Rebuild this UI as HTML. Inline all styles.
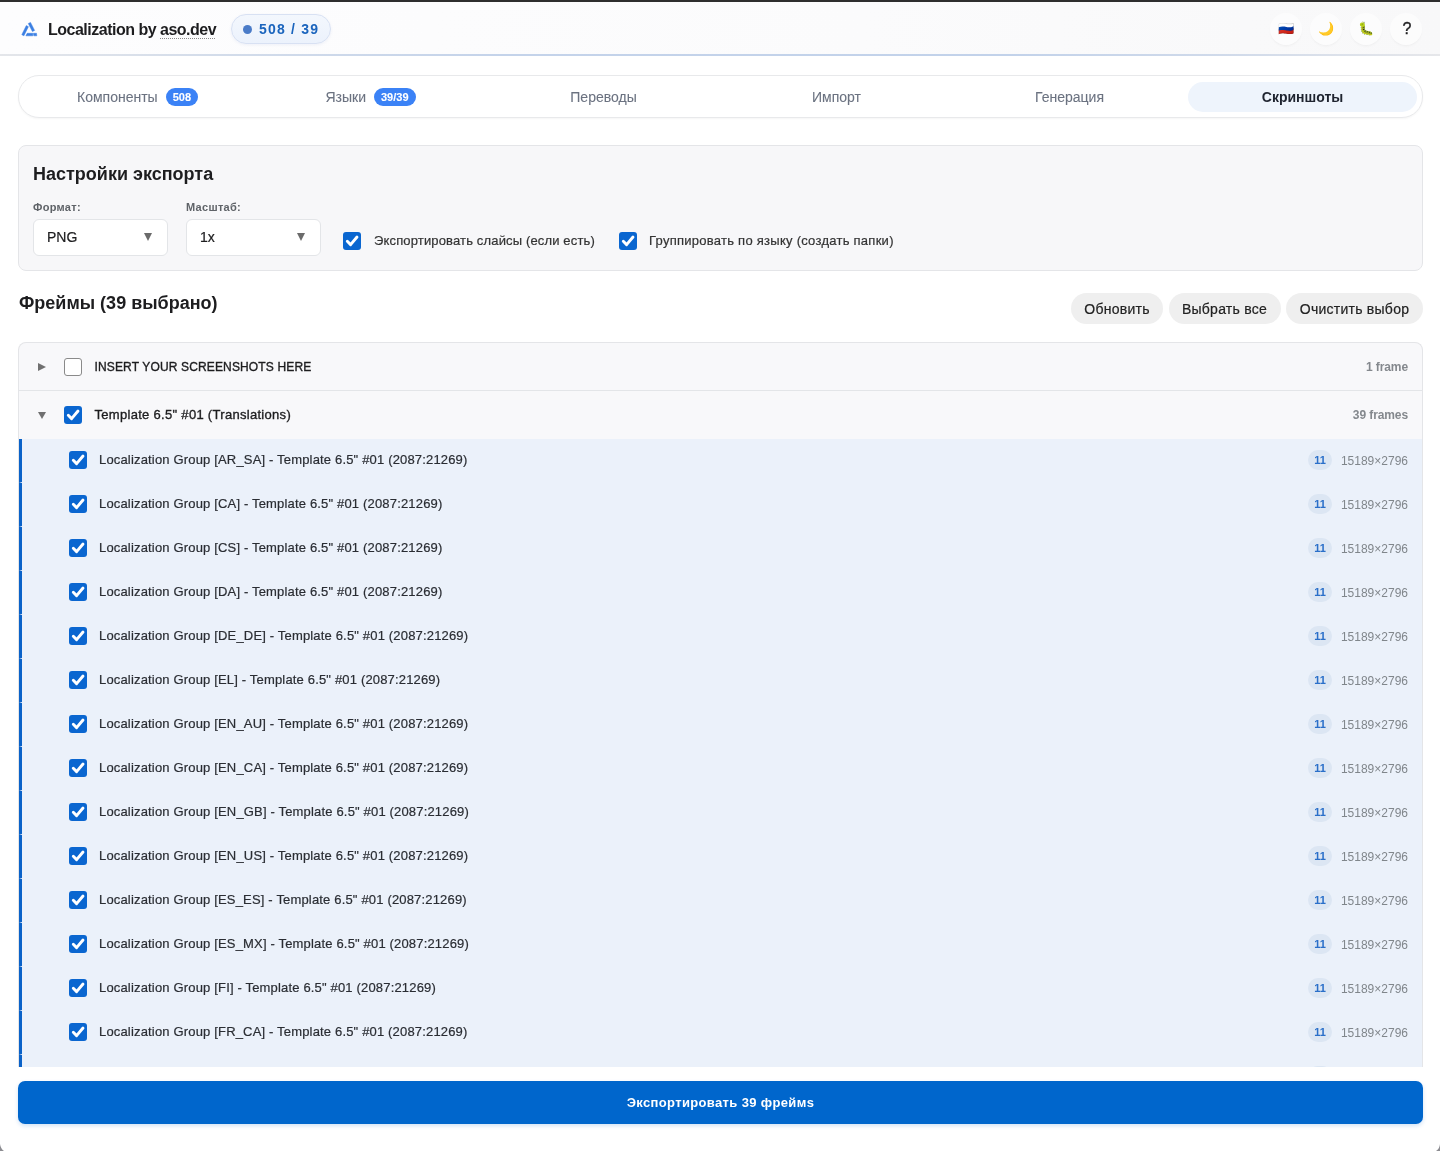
<!DOCTYPE html>
<html><head><meta charset="utf-8">
<style>
*{box-sizing:border-box;margin:0;padding:0}
html,body{width:1440px;height:1151px;overflow:hidden;background:#fff;font-family:"Liberation Sans",sans-serif;color:#1d1d1f}
.wrap{position:absolute;left:0;top:0;width:1440px;height:1151px;will-change:transform}
.topbar{position:absolute;left:0;top:0;width:1440px;height:2px;background:#2e2e2e}
.header{position:absolute;left:0;top:2px;width:1440px;height:52px;background:linear-gradient(90deg,#fdfdfe,#fbfbfc 60%,#f8f8f9)}
.hline{position:absolute;left:0;top:54px;width:1440px;height:2px;background:linear-gradient(90deg,#e4e6ea 0%,#d3dcea 15%,#c4d3ea 35%,#c2d2ea 70%,#d0daea 85%,#e6e7ea 100%)}
.logo{position:absolute}
.brand{position:absolute;left:48px;top:19px;font-size:16px;font-weight:bold;color:#1d1d1f;white-space:nowrap;letter-spacing:-0.5px}
.brand u{text-decoration:none;padding-bottom:1px;background:repeating-linear-gradient(90deg,#8a8a8a 0 1px,transparent 1px 2px) left bottom/100% 1px no-repeat}
.hbadge{position:absolute;left:231px;top:12px;width:100px;height:30px;border-radius:15px;background:linear-gradient(180deg,#f3f7fd,#ecf2fc);border:1px solid #d8e1f3;box-shadow:0 1px 3px rgba(70,90,180,0.08)}
.hbadge .dot{position:absolute;left:11px;top:10px;width:9px;height:9px;border-radius:50%;background:#4a7bc8}
.hbadge .t{position:absolute;left:27px;top:6px;font-size:14px;font-weight:bold;color:#1a64bd;letter-spacing:1.2px;white-space:nowrap}
.ibtn{position:absolute;top:11px;width:32px;height:32px;border-radius:50%;background:rgba(255,255,255,0.55);box-shadow:0 2px 3px -1px rgba(0,0,0,0.05);text-align:center;line-height:32px;font-size:13px}
.tabs{position:absolute;left:18px;top:75px;width:1405px;height:43px;border-radius:21px;border:1px solid #e8e9eb;background:#fff;box-shadow:0 1px 2px rgba(0,0,0,0.04)}
.tab{position:absolute;top:5.5px;height:30px;width:229px;border-radius:15px;text-align:center;line-height:30px;font-size:14px;color:#6b7280;white-space:nowrap}
.tab.active{background:#eef4fc;color:#1f2430;font-weight:bold}
.tbadge{display:inline-block;vertical-align:top;margin-top:6px;height:18px;line-height:18px;border-radius:9px;background:#3b82f6;color:#fff;font-size:11px;font-weight:bold;padding:0 7px;margin-left:8px}
.panel{position:absolute;left:18px;top:145px;width:1405px;height:126px;border-radius:8px;background:#f7f7f9;border:1px solid #e4e5e8}
.ptitle{position:absolute;left:14px;top:18px;font-size:18px;font-weight:bold;color:#1d1d1f;white-space:nowrap}
.lbl{position:absolute;top:55px;font-size:11px;font-weight:bold;color:#5f6368;letter-spacing:0.3px;white-space:nowrap}
.sel{position:absolute;top:73px;width:135px;height:37px;border-radius:6px;background:#fff;border:1px solid #e3e5e8;font-size:14px;color:#1d1d1f}
.sel .v{position:absolute;left:13px;top:9px}
.sel .ar{position:absolute;right:15px;top:13px;width:0;height:0;border-left:4px solid transparent;border-right:4px solid transparent;border-top:8px solid #6b6b6b}
.cb{position:absolute;width:18px;height:18px;border-radius:3px;background:#0a66d0}
.cb svg{position:absolute;left:0;top:0}
.cb.off{background:#fff;border:1.5px solid #8a8a8a}
.clbl{position:absolute;font-size:13px;color:#333;white-space:nowrap;letter-spacing:0.15px}
.ftitle{position:absolute;left:19px;top:293px;font-size:18px;font-weight:bold;color:#1d1d1f;white-space:nowrap}
.btn{position:absolute;top:293px;height:31px;border-radius:16px;background:#efefef;font-size:14px;color:#222;text-align:center;line-height:33px;white-space:nowrap;letter-spacing:0.25px}
.list{position:absolute;left:18px;top:342px;width:1405px;height:725px;border-radius:8px 8px 0 0;background:#f8f8fa;border:1px solid #e4e5e8;border-bottom:none;overflow:hidden}
.grow{position:absolute;left:0;width:1403px;height:48px}
.grow.b{border-bottom:1px solid #e3e5e8}
.tri{position:absolute;width:0;height:0}
.tri.r{left:19px;top:20px;border-top:4px solid transparent;border-bottom:4px solid transparent;border-left:8px solid #707070}
.tri.d{left:19px;top:20.5px;border-left:4px solid transparent;border-right:4px solid transparent;border-top:7.5px solid #707070}
.gname.ins{font-size:12px;letter-spacing:0.15px}
.gname{position:absolute;left:75.5px;font-size:13px;color:#1d1d1f;white-space:nowrap;letter-spacing:0.3px}
.gcount{position:absolute;right:14px;font-size:12px;color:#84888d;font-weight:bold;white-space:nowrap;letter-spacing:-0.1px}
.crow{position:absolute;left:0;width:1403px;height:44px;background:#ebf1fa;border-left:3px solid #0a62c8;border-bottom:1px solid #ebf1fa}
.crow .cb{left:47px;top:12px}
.crow .nm{position:absolute;left:77px;top:13px;font-size:13px;color:#2a2d33;white-space:nowrap;letter-spacing:0.17px}
.crow .pill{position:absolute;left:1286px;top:11px;width:24px;height:20px;border-radius:10px;background:#dce6f3;color:#2a6fc9;font-size:11px;font-weight:bold;text-align:center;line-height:20px}
.crow .dim{position:absolute;right:14px;top:15px;font-size:12px;color:#80868b;white-space:nowrap}
.export{position:absolute;left:18px;top:1081px;width:1405px;height:43px;border-radius:7px;background:#0066cc;color:#fff;font-size:13px;font-weight:bold;text-align:center;line-height:43px;letter-spacing:0.35px;box-shadow:0 2px 4px rgba(0,102,204,0.18)}

.crow .nm,.clbl,.btn,.sel .v{-webkit-text-stroke-width:0.2px}
.gname{-webkit-text-stroke-width:0.35px}
.tab{-webkit-text-stroke-width:0.1px}
.tab.active{-webkit-text-stroke-width:0}
</style></head><body><div class="wrap">
<div class="topbar"></div>
<div class="hline"></div>
<div class="header">
  <svg class="logo" width="24" height="22" viewBox="0 0 24 22" style="left:18px;top:16px"><g fill="#3b7fe2" stroke="#3b7fe2" stroke-width="0.5" stroke-linejoin="round"><path d="M3.8 16.7 L8.3 7.6 L10.4 8.7 L5.9 17.8 Z"/><path d="M10.3 5.5 L12.5 4.4 L16.6 12.4 L14.4 13.5 Z"/><path d="M9.2 15.3 L14.8 15.3 L14.8 17.8 L7.9 17.8 Z"/><path d="M15.4 15.3 L18.5 15.3 L18.8 17.8 L15.8 17.8 Z"/></g></svg>
  <div class="brand">Localization by <u>aso.dev</u></div>
  <div class="hbadge"><div class="dot"></div><div class="t">508 / 39</div></div>
  <div class="ibtn" style="left:1270px">🇷🇺</div>
  <div class="ibtn" style="left:1310px">🌙</div>
  <div class="ibtn" style="left:1350px">🐛</div>
  <div class="ibtn" style="left:1390px;color:#1d1d1f;font-size:16px;-webkit-text-stroke:0.35px #1d1d1f;line-height:31px;padding-left:2px">?</div>
</div>
<div class="tabs">
  <div class="tab" style="left:4px">Компоненты<span class="tbadge">508</span></div>
  <div class="tab" style="left:237px">Языки<span class="tbadge">39/39</span></div>
  <div class="tab" style="left:470px">Переводы</div>
  <div class="tab" style="left:703px">Импорт</div>
  <div class="tab" style="left:936px">Генерация</div>
  <div class="tab active" style="left:1169px">Скриншоты</div>
</div>
<div class="panel">
  <div class="ptitle">Настройки экспорта</div>
  <div class="lbl" style="left:14px">Формат:</div>
  <div class="lbl" style="left:167px">Масштаб:</div>
  <div class="sel" style="left:14px"><span class="v">PNG</span><span class="ar"></span></div>
  <div class="sel" style="left:167px"><span class="v">1x</span><span class="ar"></span></div>
  <div class="cb" style="left:324px;top:86px"><svg width="18" height="18" viewBox="0 0 18 18"><path d="M4.3 9.3 L7.6 12.6 L14 5" fill="none" stroke="#fff" stroke-width="2.9" stroke-linecap="round" stroke-linejoin="round"/></svg></div>
  <div class="clbl" style="left:355px;top:87px">Экспортировать слайсы (если есть)</div>
  <div class="cb" style="left:600px;top:86px"><svg width="18" height="18" viewBox="0 0 18 18"><path d="M4.3 9.3 L7.6 12.6 L14 5" fill="none" stroke="#fff" stroke-width="2.9" stroke-linecap="round" stroke-linejoin="round"/></svg></div>
  <div class="clbl" style="left:630px;top:87px;letter-spacing:0.26px">Группировать по языку (создать папки)</div>
</div>
<div class="ftitle">Фреймы (39 выбрано)</div>
<div class="btn" style="left:1071px;width:92px">Обновить</div>
<div class="btn" style="left:1168.5px;width:112px">Выбрать все</div>
<div class="btn" style="left:1286px;width:137px">Очистить выбор</div>
<div class="list" id="list">
<div class="grow b" style="top:0"><span class="tri r"></span><div class="cb off" style="left:45px;top:15px"></div><span class="gname ins" style="top:17px">INSERT YOUR SCREENSHOTS HERE</span><span class="gcount" style="top:17px">1 frame</span></div>
<div class="grow" style="top:48px"><span class="tri d"></span><div class="cb" style="left:45px;top:15px"><svg width="18" height="18" viewBox="0 0 18 18"><path d="M4.3 9.3 L7.6 12.6 L14 5" fill="none" stroke="#fff" stroke-width="2.9" stroke-linecap="round" stroke-linejoin="round"/></svg></div><span class="gname" style="top:16px">Template 6.5" #01 (Translations)</span><span class="gcount" style="top:17px">39 frames</span></div>
<div class="crow" style="top:96px"><div class="cb"><svg width="18" height="18" viewBox="0 0 18 18"><path d="M4.3 9.3 L7.6 12.6 L14 5" fill="none" stroke="#fff" stroke-width="2.9" stroke-linecap="round" stroke-linejoin="round"/></svg></div><span class="nm">Localization Group [AR_SA] - Template 6.5" #01 (2087:21269)</span><span class="pill">11</span><span class="dim">15189×2796</span></div>
<div class="crow" style="top:140px"><div class="cb"><svg width="18" height="18" viewBox="0 0 18 18"><path d="M4.3 9.3 L7.6 12.6 L14 5" fill="none" stroke="#fff" stroke-width="2.9" stroke-linecap="round" stroke-linejoin="round"/></svg></div><span class="nm">Localization Group [CA] - Template 6.5" #01 (2087:21269)</span><span class="pill">11</span><span class="dim">15189×2796</span></div>
<div class="crow" style="top:184px"><div class="cb"><svg width="18" height="18" viewBox="0 0 18 18"><path d="M4.3 9.3 L7.6 12.6 L14 5" fill="none" stroke="#fff" stroke-width="2.9" stroke-linecap="round" stroke-linejoin="round"/></svg></div><span class="nm">Localization Group [CS] - Template 6.5" #01 (2087:21269)</span><span class="pill">11</span><span class="dim">15189×2796</span></div>
<div class="crow" style="top:228px"><div class="cb"><svg width="18" height="18" viewBox="0 0 18 18"><path d="M4.3 9.3 L7.6 12.6 L14 5" fill="none" stroke="#fff" stroke-width="2.9" stroke-linecap="round" stroke-linejoin="round"/></svg></div><span class="nm">Localization Group [DA] - Template 6.5" #01 (2087:21269)</span><span class="pill">11</span><span class="dim">15189×2796</span></div>
<div class="crow" style="top:272px"><div class="cb"><svg width="18" height="18" viewBox="0 0 18 18"><path d="M4.3 9.3 L7.6 12.6 L14 5" fill="none" stroke="#fff" stroke-width="2.9" stroke-linecap="round" stroke-linejoin="round"/></svg></div><span class="nm">Localization Group [DE_DE] - Template 6.5" #01 (2087:21269)</span><span class="pill">11</span><span class="dim">15189×2796</span></div>
<div class="crow" style="top:316px"><div class="cb"><svg width="18" height="18" viewBox="0 0 18 18"><path d="M4.3 9.3 L7.6 12.6 L14 5" fill="none" stroke="#fff" stroke-width="2.9" stroke-linecap="round" stroke-linejoin="round"/></svg></div><span class="nm">Localization Group [EL] - Template 6.5" #01 (2087:21269)</span><span class="pill">11</span><span class="dim">15189×2796</span></div>
<div class="crow" style="top:360px"><div class="cb"><svg width="18" height="18" viewBox="0 0 18 18"><path d="M4.3 9.3 L7.6 12.6 L14 5" fill="none" stroke="#fff" stroke-width="2.9" stroke-linecap="round" stroke-linejoin="round"/></svg></div><span class="nm">Localization Group [EN_AU] - Template 6.5" #01 (2087:21269)</span><span class="pill">11</span><span class="dim">15189×2796</span></div>
<div class="crow" style="top:404px"><div class="cb"><svg width="18" height="18" viewBox="0 0 18 18"><path d="M4.3 9.3 L7.6 12.6 L14 5" fill="none" stroke="#fff" stroke-width="2.9" stroke-linecap="round" stroke-linejoin="round"/></svg></div><span class="nm">Localization Group [EN_CA] - Template 6.5" #01 (2087:21269)</span><span class="pill">11</span><span class="dim">15189×2796</span></div>
<div class="crow" style="top:448px"><div class="cb"><svg width="18" height="18" viewBox="0 0 18 18"><path d="M4.3 9.3 L7.6 12.6 L14 5" fill="none" stroke="#fff" stroke-width="2.9" stroke-linecap="round" stroke-linejoin="round"/></svg></div><span class="nm">Localization Group [EN_GB] - Template 6.5" #01 (2087:21269)</span><span class="pill">11</span><span class="dim">15189×2796</span></div>
<div class="crow" style="top:492px"><div class="cb"><svg width="18" height="18" viewBox="0 0 18 18"><path d="M4.3 9.3 L7.6 12.6 L14 5" fill="none" stroke="#fff" stroke-width="2.9" stroke-linecap="round" stroke-linejoin="round"/></svg></div><span class="nm">Localization Group [EN_US] - Template 6.5" #01 (2087:21269)</span><span class="pill">11</span><span class="dim">15189×2796</span></div>
<div class="crow" style="top:536px"><div class="cb"><svg width="18" height="18" viewBox="0 0 18 18"><path d="M4.3 9.3 L7.6 12.6 L14 5" fill="none" stroke="#fff" stroke-width="2.9" stroke-linecap="round" stroke-linejoin="round"/></svg></div><span class="nm">Localization Group [ES_ES] - Template 6.5" #01 (2087:21269)</span><span class="pill">11</span><span class="dim">15189×2796</span></div>
<div class="crow" style="top:580px"><div class="cb"><svg width="18" height="18" viewBox="0 0 18 18"><path d="M4.3 9.3 L7.6 12.6 L14 5" fill="none" stroke="#fff" stroke-width="2.9" stroke-linecap="round" stroke-linejoin="round"/></svg></div><span class="nm">Localization Group [ES_MX] - Template 6.5" #01 (2087:21269)</span><span class="pill">11</span><span class="dim">15189×2796</span></div>
<div class="crow" style="top:624px"><div class="cb"><svg width="18" height="18" viewBox="0 0 18 18"><path d="M4.3 9.3 L7.6 12.6 L14 5" fill="none" stroke="#fff" stroke-width="2.9" stroke-linecap="round" stroke-linejoin="round"/></svg></div><span class="nm">Localization Group [FI] - Template 6.5" #01 (2087:21269)</span><span class="pill">11</span><span class="dim">15189×2796</span></div>
<div class="crow" style="top:668px"><div class="cb"><svg width="18" height="18" viewBox="0 0 18 18"><path d="M4.3 9.3 L7.6 12.6 L14 5" fill="none" stroke="#fff" stroke-width="2.9" stroke-linecap="round" stroke-linejoin="round"/></svg></div><span class="nm">Localization Group [FR_CA] - Template 6.5" #01 (2087:21269)</span><span class="pill">11</span><span class="dim">15189×2796</span></div>
<div class="crow" style="top:712px"><div class="cb"><svg width="18" height="18" viewBox="0 0 18 18"><path d="M4.3 9.3 L7.6 12.6 L14 5" fill="none" stroke="#fff" stroke-width="2.9" stroke-linecap="round" stroke-linejoin="round"/></svg></div><span class="nm">Localization Group [FR_FR] - Template 6.5" #01 (2087:21269)</span><span class="pill">11</span><span class="dim">15189×2796</span></div>
</div>
<div class="export">Экспортировать 39 фреймs</div>
<svg style="position:absolute;left:0;top:1144px" width="4" height="7" viewBox="0 0 4 7"><path d="M0 0 Q0.6 4.5 4 7 L0 7 Z" fill="#8d8d92"/></svg>
<svg style="position:absolute;left:1435px;top:1144px" width="5" height="7" viewBox="0 0 5 7"><path d="M5 0 Q4.5 5 1 7 L5 7 Z" fill="#8d8d92"/></svg>
</div></body></html>
